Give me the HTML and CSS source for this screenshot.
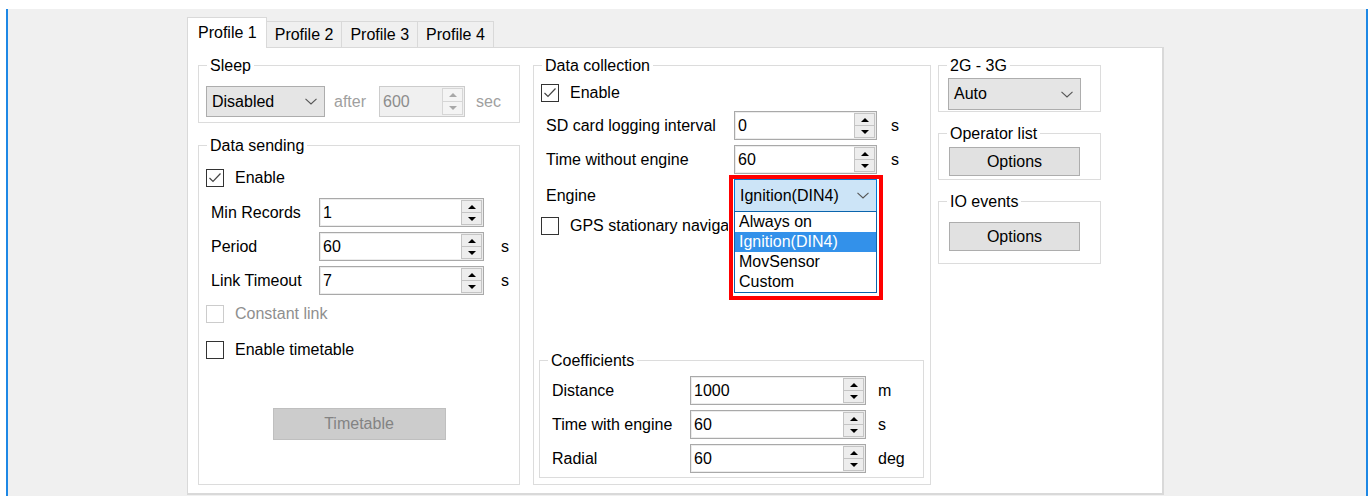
FILE: index.html
```html
<!DOCTYPE html>
<html lang="en">
<head>
<meta charset="utf-8">
<title>Profile settings</title>
<link rel="stylesheet" href="styles.css">
</head>
<body>
<div class="window">
  <div class="tabctl">
    <div class="tabs">
      <div class="tab active">Profile 1</div>
      <div class="tab">Profile 2</div>
      <div class="tab">Profile 3</div>
      <div class="tab">Profile 4</div>
    </div>
    <div class="panel">
      <!-- left column: sleep + data sending -->
      <div class="col col-left">
        <div class="group g-sleep">
          <div class="gtitle">Sleep</div>
          <div class="sleep-row">
            <div class="combo c-sleep"><span>Disabled</span><svg class="chev" width="12" height="7" viewBox="0 0 12 7"><path d="M0.5 0.8 L6 6 L11.5 0.8" fill="none" stroke="#555" stroke-width="1.1"/></svg></div>
            <span class="dim after">after</span>
            <div class="num num-sleep disabled"><span class="v">600</span><span class="spin"><i class="up"></i><i class="dn"></i></span></div>
            <span class="dim sec">sec</span>
          </div>
        </div>

        <div class="group g-send">
          <div class="gtitle">Data sending</div>
          <label class="check first"><span class="box on"><svg width="16" height="16" viewBox="0 0 16 16"><path d="M2.5 8 L6 11.5 L13.5 3.5" fill="none" stroke="#444" stroke-width="1.2"/></svg></span>Enable</label>
          <div class="form form-send">
            <span class="lbl">Min Records</span>
            <div class="num"><span class="v">1</span><span class="spin"><i class="up"></i><i class="dn"></i></span></div>
            <span class="unit"></span>
            <span class="lbl">Period</span>
            <div class="num"><span class="v">60</span><span class="spin"><i class="up"></i><i class="dn"></i></span></div>
            <span class="unit">s</span>
            <span class="lbl">Link Timeout</span>
            <div class="num"><span class="v">7</span><span class="spin"><i class="up"></i><i class="dn"></i></span></div>
            <span class="unit">s</span>
          </div>
          <label class="check off c-const"><span class="box"></span>Constant link</label>
          <label class="check c-timetable"><span class="box"></span>Enable timetable</label>
          <div class="btn-row"><div class="btn btn-timetable">Timetable</div></div>
        </div>
      </div>

      <!-- middle column: data collection -->
      <div class="col col-mid">
        <div class="group g-collect">
          <div class="gtitle">Data collection</div>
          <label class="check c-collect"><span class="box on"><svg width="16" height="16" viewBox="0 0 16 16"><path d="M2.5 8 L6 11.5 L13.5 3.5" fill="none" stroke="#444" stroke-width="1.2"/></svg></span>Enable</label>
          <div class="form form-collect">
            <span class="lbl">SD card logging interval</span>
            <div class="num"><span class="v">0</span><span class="spin"><i class="up"></i><i class="dn"></i></span></div>
            <span class="unit">s</span>
            <span class="lbl">Time without engine</span>
            <div class="num"><span class="v">60</span><span class="spin"><i class="up"></i><i class="dn"></i></span></div>
            <span class="unit">s</span>
            <span class="lbl">Engine</span>
            <div class="dd">
              <div class="dd-frame"></div>
              <div class="combo dd-combo"><span>Ignition(DIN4)</span><svg class="chev" width="12" height="7" viewBox="0 0 12 7"><path d="M0.5 0.8 L6 6 L11.5 0.8" fill="none" stroke="#555" stroke-width="1.1"/></svg></div>
              <ul class="dd-list">
                <li>Always on</li>
                <li class="sel">Ignition(DIN4)</li>
                <li>MovSensor</li>
                <li>Custom</li>
              </ul>
            </div>
            <span class="unit"></span>
          </div>
          <label class="check c-gps"><span class="box"></span><span class="clip">GPS stationary navigation</span></label>

          <div class="group g-coef">
            <div class="gtitle">Coefficients</div>
            <div class="form form-coef">
              <span class="lbl">Distance</span>
              <div class="num"><span class="v">1000</span><span class="spin"><i class="up"></i><i class="dn"></i></span></div>
              <span class="unit">m</span>
              <span class="lbl">Time with engine</span>
              <div class="num"><span class="v">60</span><span class="spin"><i class="up"></i><i class="dn"></i></span></div>
              <span class="unit">s</span>
              <span class="lbl">Radial</span>
              <div class="num"><span class="v">60</span><span class="spin"><i class="up"></i><i class="dn"></i></span></div>
              <span class="unit">deg</span>
            </div>
          </div>
        </div>
      </div>

      <!-- right column: network + options -->
      <div class="col col-right">
        <div class="group g-net">
          <div class="gtitle">2G - 3G</div>
          <div class="combo c-net"><span>Auto</span><svg class="chev" width="12" height="7" viewBox="0 0 12 7"><path d="M0.5 0.8 L6 6 L11.5 0.8" fill="none" stroke="#555" stroke-width="1.1"/></svg></div>
        </div>
        <div class="group g-oper">
          <div class="gtitle">Operator list</div>
          <div class="btn btn-opt">Options</div>
        </div>
        <div class="group g-io">
          <div class="gtitle">IO events</div>
          <div class="btn btn-opt">Options</div>
        </div>
      </div>
    </div>
  </div>
</div>
</body>
</html>
```

FILE: styles.css
```css
* { box-sizing: border-box; }

html, body {
  margin: 0;
  height: 100%;
}

body {
  background: #ffffff;
  font-family: "Liberation Sans", Arial, sans-serif;
  font-size: 16px;
  line-height: 18px;
  color: #000;
  overflow: hidden;
}

/* window frame */
.window {
  margin: 9px 3px 0 6px;
  height: 487px;
  background: #f0f0f0;
  border-left: 2px solid #1e88e5;
  border-right: 2px solid #1e88e5;
  padding: 8px 0 0 179px;
}

.tabctl { width: 977px; }

/* tab headers */
.tabs {
  display: flex;
  align-items: flex-end;
  height: 30px;
}

.tab {
  height: 26px;
  padding: 0 8px;
  margin-left: -1px;
  border: 1px solid #d9d9d9;
  border-bottom: none;
  background: #f0f0f0;
  display: flex;
  align-items: center;
  white-space: nowrap;
}

.tab.active {
  height: 31px;
  margin-left: 0;
  margin-bottom: -1px;
  padding: 0 9px 0 10px;
  background: #fff;
  position: relative;
  z-index: 1;
}

/* tab page */
.panel {
  height: 448px;
  background: #fff;
  border: 1px solid #d9d9d9;
  border-right-width: 2px;
  border-bottom-width: 2px;
  padding: 17px 0 0 10px;
  display: flex;
  align-items: flex-start;
}

.col { display: flex; flex-direction: column; }
.col-left { width: 322px; }
.col-mid { width: 398px; margin-left: 13px; }
.col-right { width: 163px; margin-left: 7px; }

/* group boxes */
.group {
  border: 1px solid #dcdcdc;
  display: flex;
  flex-direction: column;
  align-items: flex-start;
}

.gtitle {
  width: max-content;
  margin: -9px 0 0 8px;
  padding: 0 3px;
  background: #fff;
  line-height: 18px;
  white-space: nowrap;
}

.g-sleep { height: 58px; }
.g-send { height: 340px; margin-top: 22px; }
.g-collect { height: 420px; padding-bottom: 6px; }
.g-coef {
  align-self: stretch;
  height: 118px;
  margin: auto 6px 0 5px;
}
.g-net { height: 47px; }
.g-oper { height: 47px; margin-top: 21px; }
.g-io { height: 63px; margin-top: 21px; }

/* sleep row */
.sleep-row {
  display: flex;
  align-items: center;
  margin-top: 11px;
  padding-left: 7px;
}

.dim { color: #a0a0a0; }
.after { margin-left: 9px; }
.sec { margin-left: 11px; }

/* combo boxes */
.combo {
  display: flex;
  align-items: center;
  justify-content: space-between;
  background: #e5e5e5;
  border: 1px solid #adadad;
  padding: 0 7px 0 5px;
  white-space: nowrap;
}

.combo .chev { flex: none; }

.c-sleep { width: 119px; height: 31px; }
.c-net { width: 133px; height: 32px; margin: 3px 0 0 9px; }

/* numeric up-down */
.num {
  display: flex;
  align-items: center;
  justify-content: space-between;
  height: 29px;
  background: #fff;
  border: 1px solid #a9a9a9;
  box-shadow: inset 0 0 0 1px #ececec;
  padding-left: 3px;
}

.num .v { white-space: nowrap; }

.num-sleep {
  width: 86px;
  height: 31px;
  margin-left: 13px;
}

.num.disabled {
  background: #f0f0f0;
  border-color: #cccccc;
  box-shadow: none;
  color: #8c8c8c;
}

.spin {
  align-self: stretch;
  width: 22px;
  display: flex;
  flex-direction: column;
  padding: 1px 1px 1px 0;
}

.spin i {
  flex: 1;
  display: flex;
  align-items: center;
  justify-content: center;
  background: #ededed;
  border: 1px solid #c4c4c4;
}

.spin i + i { border-top: none; }

.spin .up::after,
.spin .dn::after {
  content: "";
  border-left: 4px solid transparent;
  border-right: 4px solid transparent;
}

.spin .up::after { border-bottom: 4px solid #000; }
.spin .dn::after { border-top: 4px solid #000; }

.disabled .spin i { background: #f4f4f4; border-color: #d6d6d6; }
.disabled .spin .up::after { border-bottom-color: #a8a8a8; }
.disabled .spin .dn::after { border-top-color: #a8a8a8; }

/* check boxes */
.check {
  display: flex;
  align-items: center;
  height: 20px;
  padding-left: 7px;
  white-space: nowrap;
}

.check .box {
  width: 18px;
  height: 18px;
  margin-right: 11px;
  border: 1px solid #333;
  background: #fff;
  display: flex;
  align-items: center;
  justify-content: center;
  flex: none;
}

.check .clip {
  display: block;
  width: 158px;
  overflow: hidden;
}

.check.off { color: #8f8f8f; }
.check.off .box { border-color: #cccccc; }

.check.first { margin-top: 13px; }
.c-const { margin-top: 9px; }
.c-timetable { margin-top: 16px; }
.c-collect { margin-top: 8px; }
.c-gps { margin-top: 4px; }

/* label / field / unit grids */
.form {
  display: grid;
  row-gap: 5px;
  align-items: center;
  padding-left: 12px;
}

.form .lbl { white-space: nowrap; }

.form-send {
  grid-template-columns: 108px 165px auto;
  margin-top: 10px;
}
.form-send .unit { padding-left: 17px; }

.form-collect {
  grid-template-columns: 188px 143px auto;
  margin-top: 8px;
}
.form-collect .unit { padding-left: 14px; }

.form-coef {
  grid-template-columns: 138px 176px auto;
  margin-top: 6px;
}
.form-coef .unit { padding-left: 12px; }

/* open engine drop-down */
.dd {
  position: relative;
  height: 33px;
}

.dd-frame {
  position: absolute;
  left: -5px;
  top: -4px;
  width: 154px;
  height: 125px;
  border: 4px solid #ff0000;
  background: #fff;
  z-index: 2;
}

.dd-combo {
  position: relative;
  z-index: 3;
  height: 33px;
  background: #cce4f7;
  border-color: #0078d7;
}

.dd-list {
  position: absolute;
  left: 0;
  right: 0;
  top: 32px;
  z-index: 3;
  margin: 0;
  padding: 0;
  list-style: none;
  background: #fff;
  border: 1px solid #0a64ad;
}

.dd-list li {
  height: 20px;
  line-height: 20px;
  padding-left: 4px;
  white-space: nowrap;
}

.dd-list li.sel {
  background: #3391ea;
  color: #fff;
}

/* buttons */
.btn {
  display: flex;
  align-items: center;
  justify-content: center;
  background: #e1e1e1;
  border: 1px solid #adadad;
  white-space: nowrap;
}

.btn-row {
  align-self: stretch;
  display: flex;
  justify-content: center;
  margin-top: 48px;
}

.btn-timetable {
  width: 173px;
  height: 32px;
  background: #cccccc;
  border-color: #bfbfbf;
  color: #838383;
}

.btn-opt {
  width: 131px;
  height: 29px;
  margin-left: 10px;
}

.g-oper .btn-opt { margin-top: 4px; }
.g-io .btn-opt { margin-top: 11px; }
```
